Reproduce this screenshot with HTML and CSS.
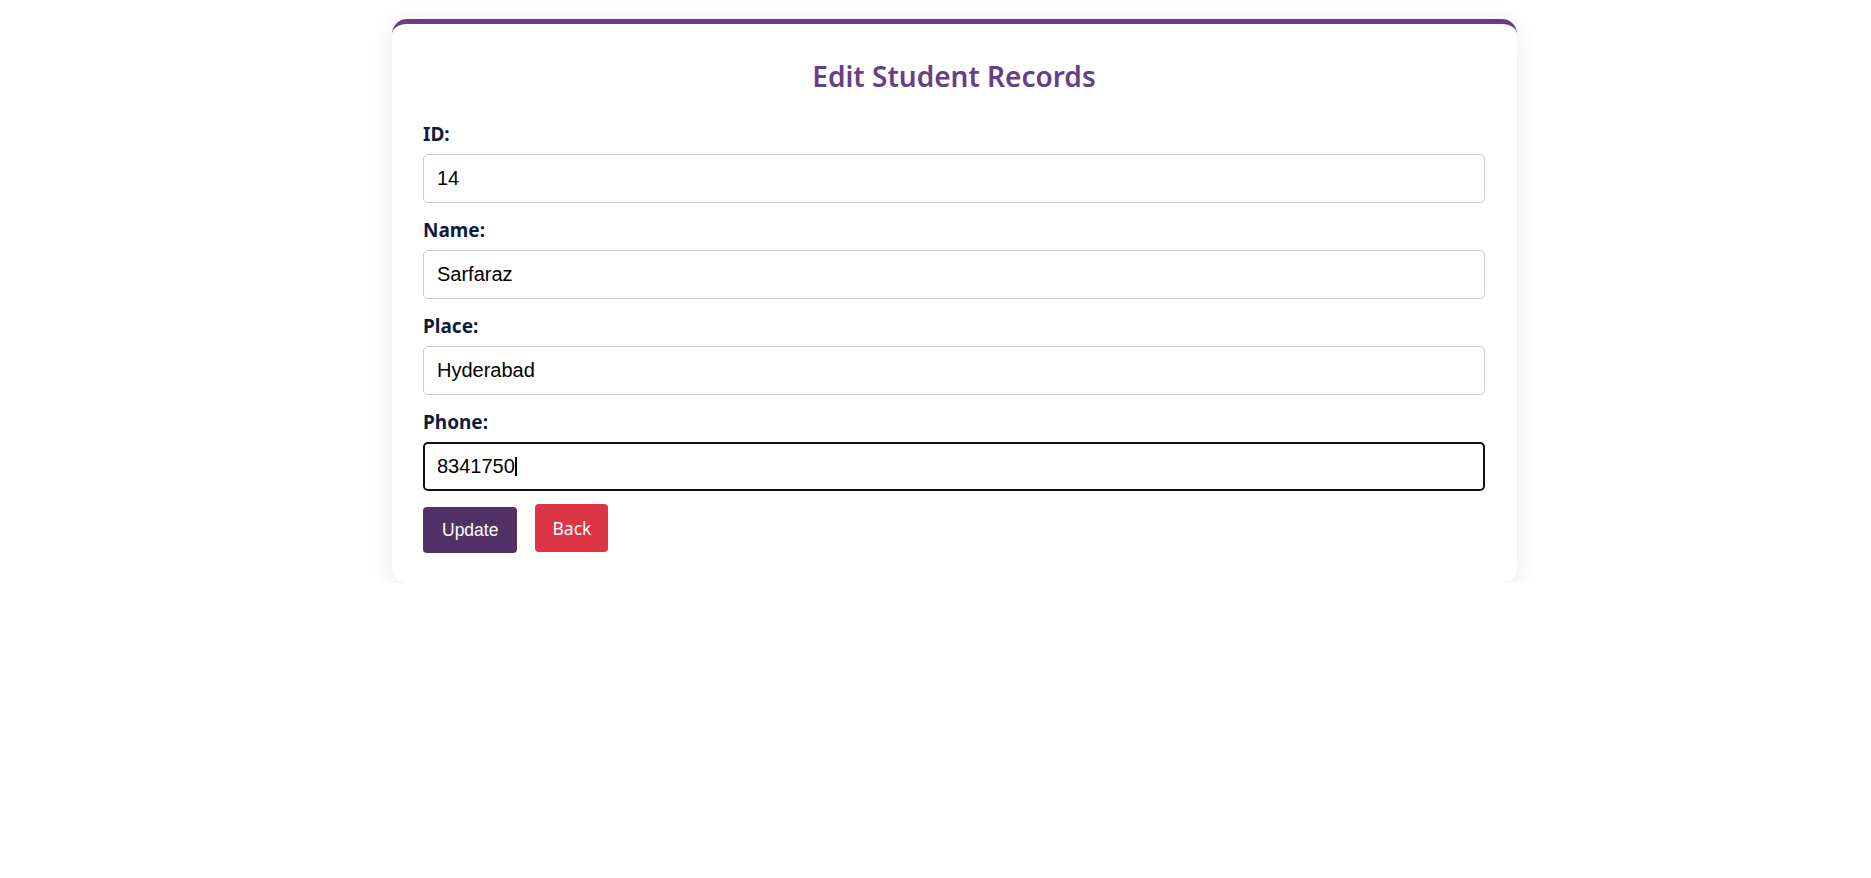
FILE: index.html
```html
<!DOCTYPE html>
<html lang="en">
<head>
<meta charset="utf-8">
<title>Edit Student Records</title>
<link rel="stylesheet" href="styles.css">
</head>
<body>
<div class="card">
  <h2 class="title">Edit Student Records</h2>
  <form class="form">
    <label class="label" for="id">ID:</label>
    <input class="field" id="id" type="text" value="14">
    <label class="label" for="name">Name:</label>
    <input class="field" id="name" type="text" value="Sarfaraz">
    <label class="label" for="place">Place:</label>
    <input class="field" id="place" type="text" value="Hyderabad">
    <label class="label" for="phone">Phone:</label>
    <div class="field-wrap">
      <input class="field field-focus" id="phone" type="text" value="8341750">
      <span class="caret"></span>
    </div>
    <div class="actions">
      <button class="btn-update" type="button">Update</button>
      <a class="btn-back" href="#">Back</a>
    </div>
  </form>
</div>
</body>
</html>
```
FILE: styles.css
```css
html, body {
  margin: 0;
  padding: 0;
  background: #ffffff;
}
body {
  font-family: "Noto Sans", "Open Sans", sans-serif;
  padding-left: 38px;
}
.card {
  box-sizing: border-box;
  width: 1125px;
  margin: 19px auto 0;
  background: #fff;
  border-top: 5px solid #673f87;
  border-radius: 15px;
  box-shadow: 0 4px 24px rgba(0, 0, 0, 0.09);
  padding: 0 32px 30px 31px;
}
.title {
  margin: 0;
  padding-top: 32px;
  text-align: center;
  color: #673f87;
  font-size: 28px;
  font-weight: 600;
  line-height: 40px;
}
.form {
  display: flex;
  flex-direction: column;
  padding-top: 25px;
}
.label {
  font-size: 19px;
  font-weight: 700;
  color: #0f1a3d;
  line-height: 26px;
  margin-bottom: 7px;
}
.field {
  box-sizing: border-box;
  width: 100%;
  height: 49px;
  border: 1px solid #cccccc;
  border-radius: 5px;
  padding: 0 13px;
  font-family: "Liberation Sans", Arial, sans-serif;
  font-size: 20px;
  color: #000;
  margin: 0 0 14px;
  outline: none;
  background: #fff;
}
.field-wrap {
  position: relative;
}
.field-focus {
  border: 2px solid #111;
  padding: 0 12px;
  margin-bottom: 13px;
}
.caret {
  position: absolute;
  left: 92px;
  top: 15px;
  width: 2px;
  height: 19px;
  background: #000;
}
.actions {
  display: flex;
  align-items: flex-start;
  gap: 18px;
}
.btn-update {
  margin-top: 3px;
  height: 46px;
  padding: 0 19px;
  border: none;
  border-radius: 4px;
  background: #523266;
  color: #fff;
  font-family: "Liberation Sans", Arial, sans-serif;
  font-size: 17.5px;
  cursor: pointer;
}
.btn-back {
  display: inline-flex;
  align-items: center;
  height: 48px;
  padding: 0 17px;
  border-radius: 4px;
  background: #dc3545;
  color: #fff;
  text-decoration: none;
  font-size: 17.5px;
}
```
